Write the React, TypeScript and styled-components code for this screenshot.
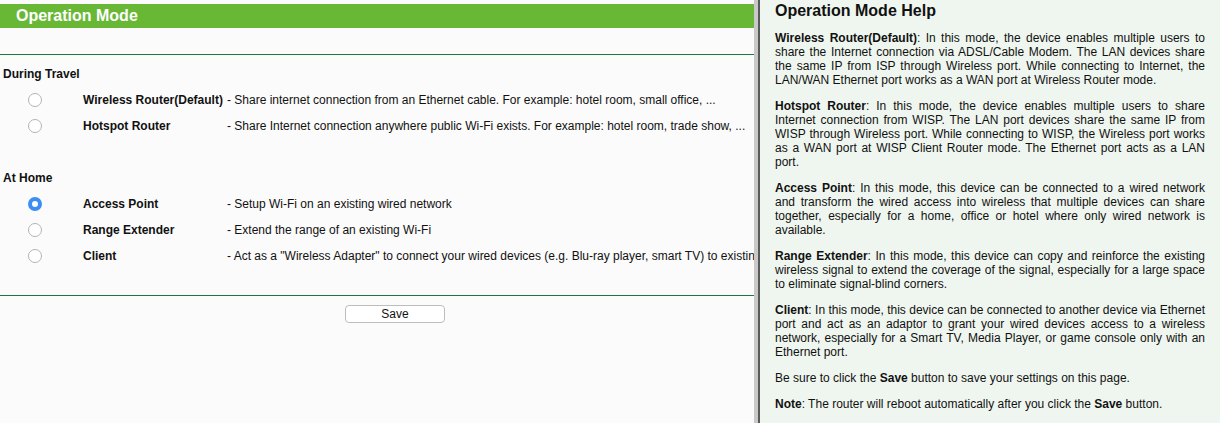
import React from "react";
import styled, { createGlobalStyle } from "styled-components";

const Global = createGlobalStyle`
  html, body { margin: 0; padding: 0; }
  body { font-family: "Liberation Sans", Arial, sans-serif; font-size: 12px; color: #000; }
`;

const Page = styled.div`
  display: flex;
  height: 423px;
  width: 1220px;
  overflow: hidden;
`;

const Left = styled.div`
  width: 754px;
  flex: none;
  background: #fbfbfb;
  padding-top: 4px;
  overflow: hidden;
  box-sizing: border-box;
`;

const Divider = styled.div`
  flex: none;
  width: 4px;
  background: #c9c9c9;
  border-right: 2px solid #5a5a5a;
`;

const Header = styled.div`
  height: 24px;
  line-height: 24px;
  background: #68b836;
  color: #fff;
  font-weight: bold;
  font-size: 16px;
  padding-left: 16px;
`;

const Rule = styled.div`
  height: 1px;
  background: #1b7a3b;
  margin-top: ${(p: { $top: number }) => p.$top}px;
`;

const Form = styled.div`
  padding-top: 6px;
  display: flex;
  flex-direction: column;
`;

const GroupTitle = styled.div`
  height: 26px;
  line-height: 26px;
  font-weight: bold;
  padding-left: 3px;
  color: #111;
`;

const Row = styled.label`
  display: flex;
  align-items: center;
  height: 26px;
  white-space: nowrap;
`;

const Radio = styled.input.attrs({ type: "radio" })`
  appearance: none;
  -webkit-appearance: none;
  box-sizing: border-box;
  width: 14px;
  height: 14px;
  margin: 0 41px 0 28px;
  border-radius: 50%;
  border: 1px solid #b3b3b3;
  background: #fff;
  flex: none;
  &:checked {
    border: 4.5px solid #3c8ff2;
    background: #fff;
  }
`;

const ModeName = styled.span`
  width: 144px;
  flex: none;
  font-weight: bold;
  color: #111;
`;

const ModeDesc = styled.span`
  color: #111;
`;

const Gap = styled.div`
  height: 26px;
`;

const SaveRow = styled.div`
  padding: 9px 0 0 345px;
`;

const Button = styled.button`
  width: 100px;
  height: 18px;
  box-sizing: border-box;
  background: #fff;
  border: 1px solid #bdbdbd;
  border-radius: 4px;
  font-family: "Liberation Sans", Arial, sans-serif;
  font-size: 12px;
  color: #111;
  padding: 0;
  line-height: 16px;
`;

const Right = styled.div`
  flex: 1;
  background: #eff6ef;
  padding: 2px 15px 0 15px;
  box-sizing: border-box;
`;

const HelpTitle = styled.div`
  font-size: 16px;
  font-weight: bold;
  line-height: 18px;
  margin-bottom: 11px;
  color: #111;
`;

const Para = styled.p`
  margin: 0 0 12px;
  line-height: 14px;
  text-align: justify;
  color: #111;
`;

type Mode = { name: string; desc: string; checked?: boolean };

const travel: Mode[] = [
  { name: "Wireless Router(Default)", desc: "- Share internet connection from an Ethernet cable. For example: hotel room, small office, ..." },
  { name: "Hotspot Router", desc: "- Share Internet connection anywhere public Wi-Fi exists. For example: hotel room, trade show, ..." },
];

const home: Mode[] = [
  { name: "Access Point", desc: "- Setup Wi-Fi on an existing wired network", checked: true },
  { name: "Range Extender", desc: "- Extend the range of an existing Wi-Fi" },
  { name: "Client", desc: "- Act as a \"Wireless Adapter\" to connect your wired devices (e.g. Blu-ray player, smart TV) to existing Wi-Fi network" },
];

const ModeRow = ({ m }: { m: Mode }) => (
  <Row>
    <Radio name="mode" defaultChecked={m.checked} />
    <ModeName>{m.name}</ModeName>
    <ModeDesc>{m.desc}</ModeDesc>
  </Row>
);

export default function App() {
  return (
    <>
      <Global />
      <Page>
        <Left>
          <Header>Operation Mode</Header>
          <Rule $top={26} />
          <Form>
            <GroupTitle>During Travel</GroupTitle>
            {travel.map((m) => (
              <ModeRow key={m.name} m={m} />
            ))}
            <Gap />
            <GroupTitle>At Home</GroupTitle>
            {home.map((m) => (
              <ModeRow key={m.name} m={m} />
            ))}
          </Form>
          <Rule $top={26} />
          <SaveRow>
            <Button>Save</Button>
          </SaveRow>
        </Left>
        <Divider />
        <Right>
          <HelpTitle>Operation Mode Help</HelpTitle>
          <Para>
            <b>Wireless Router(Default)</b>: In this mode, the device enables multiple users to share the Internet connection via ADSL/Cable Modem. The LAN devices share the same IP from ISP through Wireless port. While connecting to Internet, the LAN/WAN Ethernet port works as a WAN port at Wireless Router mode.
          </Para>
          <Para>
            <b>Hotspot Router</b>: In this mode, the device enables multiple users to share Internet connection from WISP. The LAN port devices share the same IP from WISP through Wireless port. While connecting to WISP, the Wireless port works as a WAN port at WISP Client Router mode. The Ethernet port acts as a LAN port.
          </Para>
          <Para>
            <b>Access Point</b>: In this mode, this device can be connected to a wired network and transform the wired access into wireless that multiple devices can share together, especially for a home, office or hotel where only wired network is available.
          </Para>
          <Para>
            <b>Range Extender</b>: In this mode, this device can copy and reinforce the existing wireless signal to extend the coverage of the signal, especially for a large space to eliminate signal-blind corners.
          </Para>
          <Para>
            <b>Client</b>: In this mode, this device can be connected to another device via Ethernet port and act as an adaptor to grant your wired devices access to a wireless network, especially for a Smart TV, Media Player, or game console only with an Ethernet port.
          </Para>
          <Para>
            Be sure to click the <b>Save</b> button to save your settings on this page.
          </Para>
          <Para>
            <b>Note</b>: The router will reboot automatically after you click the <b>Save</b> button.
          </Para>
        </Right>
      </Page>
    </>
  );
}
